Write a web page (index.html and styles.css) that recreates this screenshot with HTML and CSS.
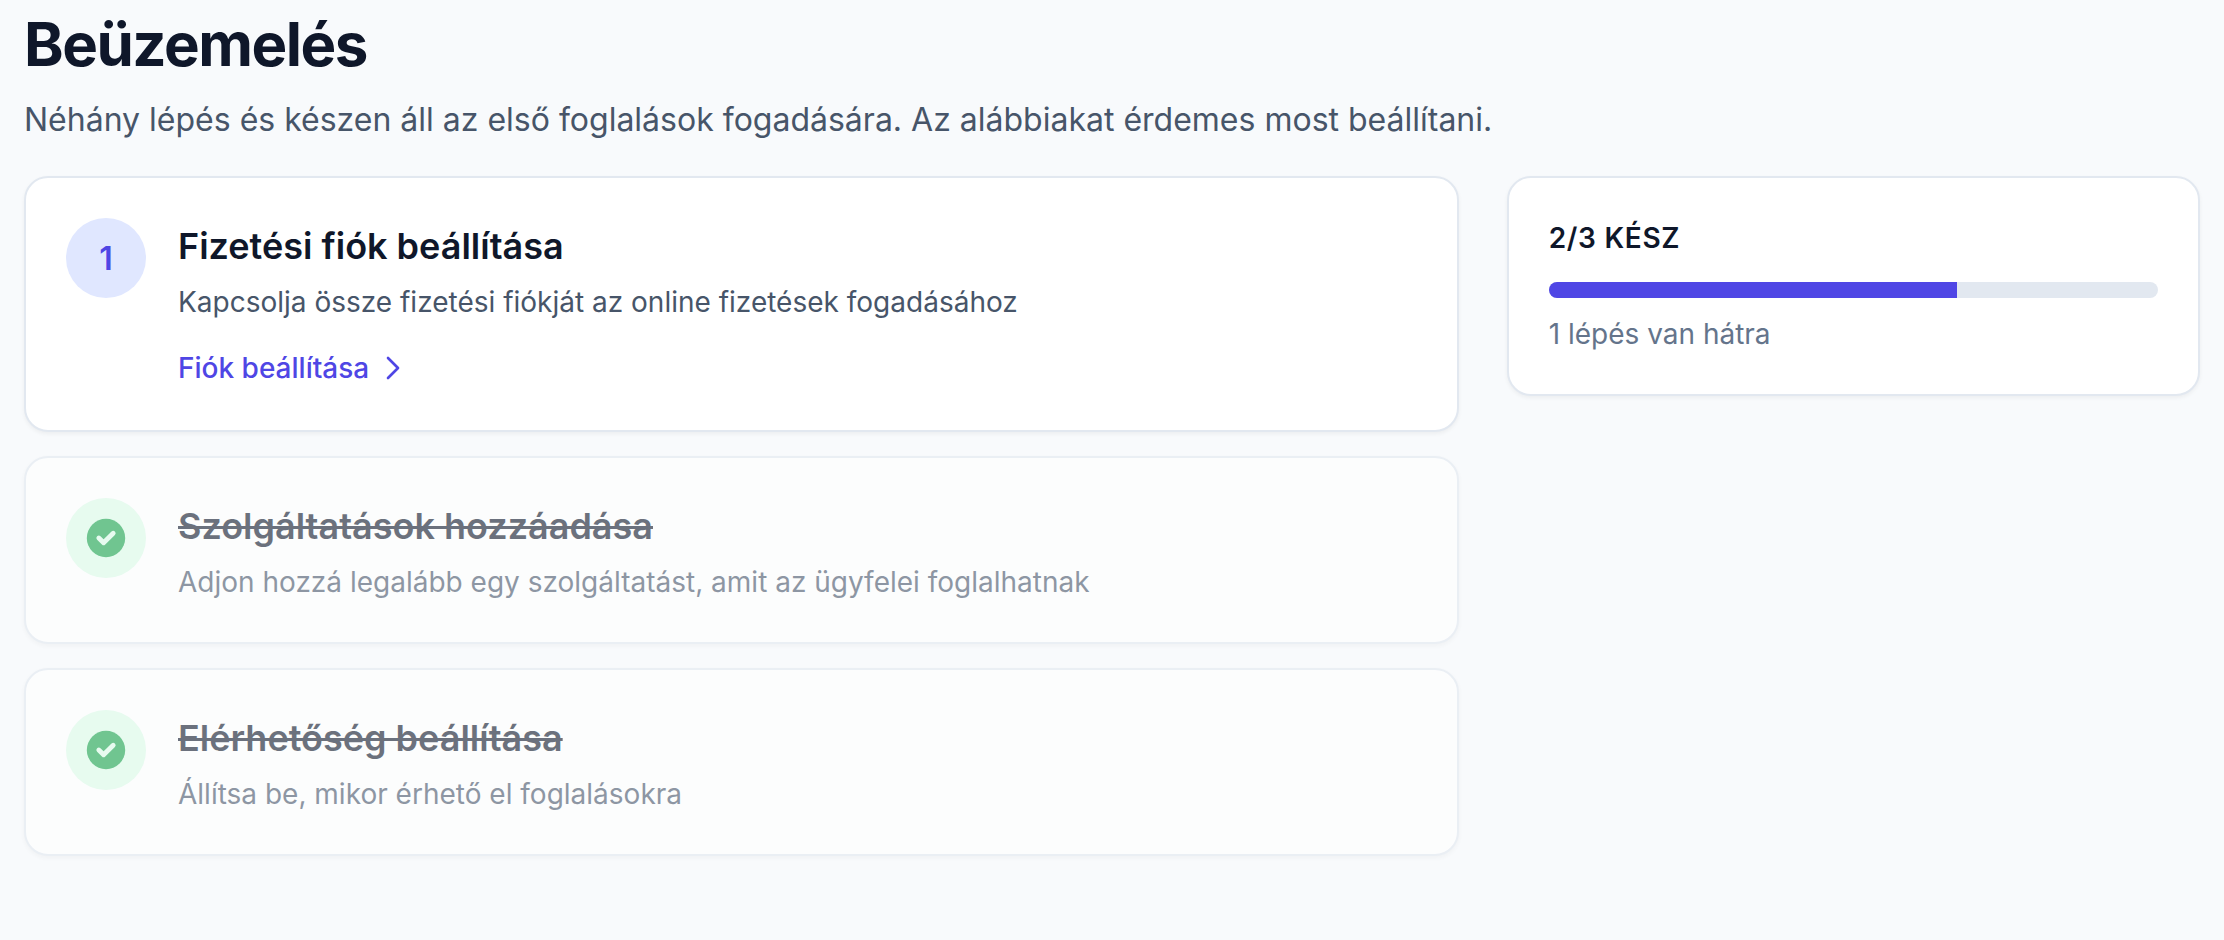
FILE: index.html
```html
<!DOCTYPE html>
<html lang="hu">
<head>
    <meta charset="UTF-8">
    <meta name="viewport" content="width=device-width, initial-scale=1.0">
    <title>Beüzemelés</title>
    <link rel="stylesheet" href="styles.css">
</head>
<body>
    <header class="page-header">
        <h1>Beüzemelés</h1>
        <p>Néhány lépés és készen áll az első foglalások fogadására. Az alábbiakat érdemes most beállítani.</p>
    </header>

    <main class="layout">
        <ol class="steps">
            <li class="card step">
                <span class="step-badge">1</span>
                <div class="step-body">
                    <h2>Fizetési fiók beállítása</h2>
                    <p>Kapcsolja össze fizetési fiókját az online fizetések fogadásához</p>
                    <a class="step-link" href="#">
                        Fiók beállítása
                        <svg viewBox="0 0 24 24" aria-hidden="true"><path d="m8.25 4.5 7.5 7.5-7.5 7.5"/></svg>
                    </a>
                </div>
            </li>
            <li class="card step done">
                <span class="step-badge">
                    <svg viewBox="0 0 20 20" aria-hidden="true"><circle cx="10" cy="10" r="8"/><path d="m7 10 2 2 4-4"/></svg>
                </span>
                <div class="step-body">
                    <h2>Szolgáltatások hozzáadása</h2>
                    <p>Adjon hozzá legalább egy szolgáltatást, amit az ügyfelei foglalhatnak</p>
                </div>
            </li>
            <li class="card step done">
                <span class="step-badge">
                    <svg viewBox="0 0 20 20" aria-hidden="true"><circle cx="10" cy="10" r="8"/><path d="m7 10 2 2 4-4"/></svg>
                </span>
                <div class="step-body">
                    <h2>Elérhetőség beállítása</h2>
                    <p>Állítsa be, mikor érhető el foglalásokra</p>
                </div>
            </li>
        </ol>

        <aside class="card summary">
            <h3>2/3 KÉSZ</h3>
            <div class="progress">
                <div class="progress-bar" style="width: 67%"></div>
            </div>
            <p>1 lépés van hátra</p>
        </aside>
    </main>
</body>
</html>
```

FILE: styles.css
```css
* {
    box-sizing: border-box;
}

body {
    margin: 0;
    padding: 8px 24px 48px;
    font-family: Inter, sans-serif;
    background: #f8fafc;
    color: #0f172a;
}

h1, h2, h3, p, ol {
    margin: 0;
    padding: 0;
}

.page-header {
    margin-bottom: 32px;
}

.page-header h1 {
    font-size: 60px;
    line-height: 72px;
    font-weight: 700;
    letter-spacing: -0.025em;
}

.page-header p {
    margin-top: 16px;
    font-size: 32px;
    line-height: 48px;
    color: #475569;
}

.layout {
    display: grid;
    grid-template-columns: repeat(3, minmax(0, 1fr));
    gap: 48px;
    align-items: start;
}

.steps {
    grid-column: span 2;
    display: flex;
    flex-direction: column;
    gap: 24px;
    list-style: none;
}

.card {
    background: #ffffff;
    border: 2px solid #e2e8f0;
    border-radius: 24px;
    box-shadow: 0 2px 4px rgba(0, 0, 0, 0.05);
    padding: 40px;
}

.step {
    display: flex;
    gap: 32px;
}

.step-badge {
    flex-shrink: 0;
    display: flex;
    align-items: center;
    justify-content: center;
    width: 80px;
    height: 80px;
    border-radius: 50%;
    background: #e0e7ff;
    color: #4f46e5;
    font-size: 32px;
    font-weight: 600;
}

.step-badge svg {
    width: 48px;
    height: 48px;
}

.step-badge circle {
    fill: #16a34a;
}

.step-badge path {
    fill: none;
    stroke: #dcfce7;
    stroke-width: 2;
    stroke-linecap: round;
    stroke-linejoin: round;
}

.step-body h2 {
    font-size: 36px;
    line-height: 56px;
    font-weight: 600;
}

.step-body p {
    font-size: 28px;
    line-height: 40px;
    margin-top: 8px;
    color: #475569;
}

.step-link {
    display: flex;
    align-items: center;
    gap: 8px;
    width: fit-content;
    margin-top: 24px;
    font-size: 28px;
    line-height: 44px;
    font-weight: 500;
    color: #4f46e5;
    text-decoration: none;
}

.step-link svg {
    width: 32px;
    height: 32px;
    fill: none;
    stroke: currentColor;
    stroke-width: 2;
    stroke-linecap: round;
    stroke-linejoin: round;
}

.done {
    opacity: 0.6;
}

.done .step-badge {
    background: #dcfce7;
}

.done h2 {
    text-decoration: line-through;
}

.summary h3 {
    font-size: 28px;
    line-height: 40px;
    font-weight: 600;
    letter-spacing: 0.025em;
}

.summary p {
    margin-top: 16px;
    font-size: 28px;
    line-height: 40px;
    color: #64748b;
}

.progress {
    height: 16px;
    margin-top: 24px;
    border-radius: 8px;
    background: #e2e8f0;
    overflow: hidden;
}

.progress-bar {
    height: 100%;
    background: #4f46e5;
}
```
